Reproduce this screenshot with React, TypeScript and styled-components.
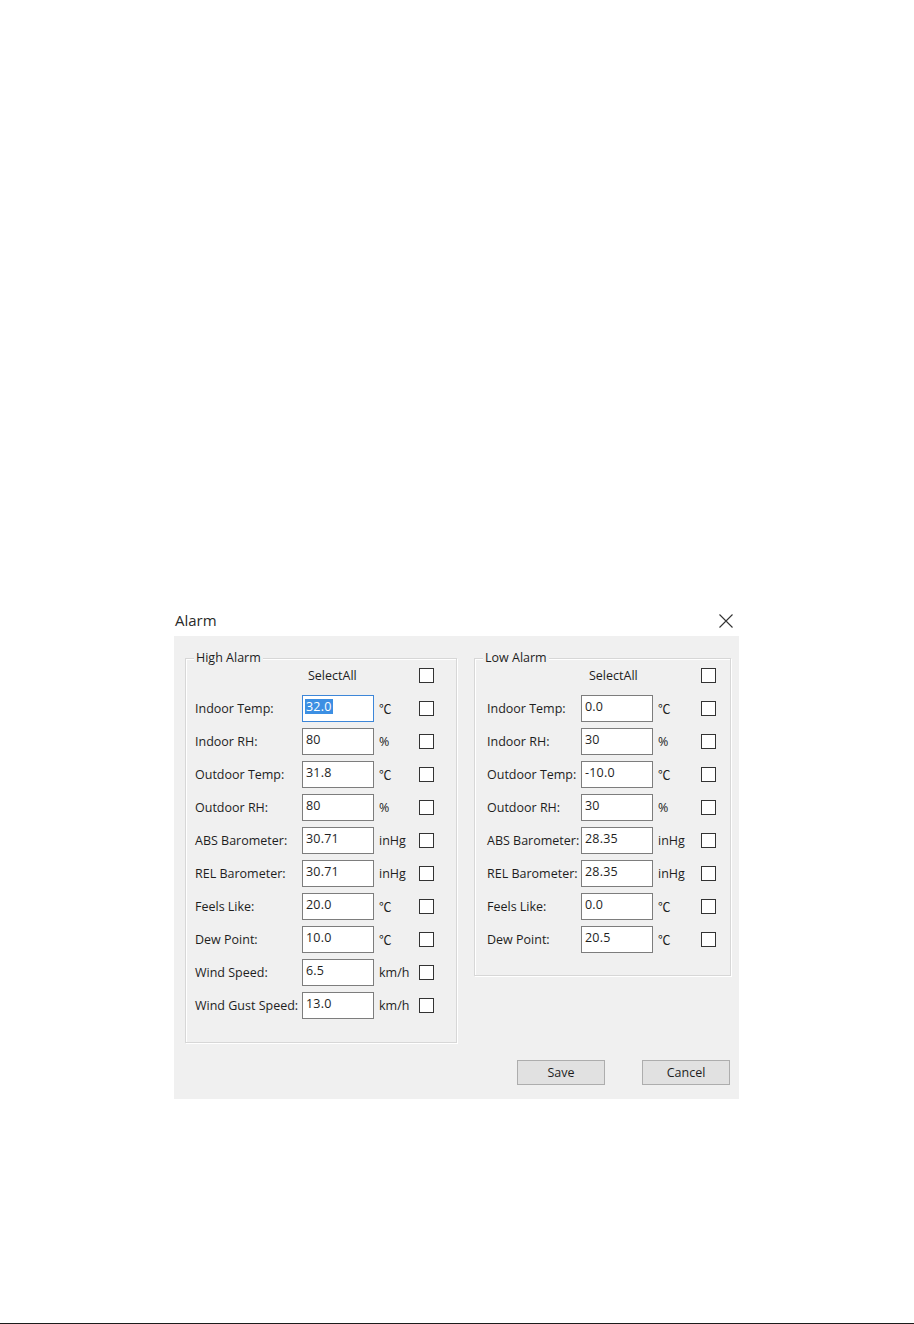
import React from "react";
import styled, { createGlobalStyle } from "styled-components";

const Global = createGlobalStyle`
  html, body { margin: 0; padding: 0; background: #ffffff; }
  body { font-family: "Open Sans", "Noto Sans CJK SC", sans-serif; color: #1e1e1e; }
`;

const Page = styled.div`
  width: 914px;
  height: 1324px;
  display: flex;
  flex-direction: column;
  overflow: hidden;
`;

const Dialog = styled.div`
  margin: 605px 0 0 174px;
  width: 565px;
  display: flex;
  flex-direction: column;
`;

const TitleBar = styled.div`
  height: 31px;
  display: flex;
  align-items: center;
  justify-content: space-between;
  padding: 0 6px 0 1px;
  background: #ffffff;
`;

const Title = styled.span`
  font-size: 15px;
  color: #2a2a2a;
  line-height: 1;
`;

const Body = styled.div`
  background: #f0f0f0;
  padding: 22px 8px 14px 11px;
  display: flex;
  flex-direction: column;
`;

const Columns = styled.div`
  display: flex;
  align-items: flex-start;
  gap: 17px;
`;

const Group = styled.div<{ $w: number; $padL: number; $padB: number }>`
  position: relative;
  width: ${(p) => p.$w}px;
  box-sizing: border-box;
  border: 1px solid #d7d7d7;
  box-shadow: inset 1px 1px 0 #ffffff, 1px 1px 0 #ffffff;
  padding: 0 0 ${(p) => p.$padB}px ${(p) => p.$padL}px;
`;

const Legend = styled.span`
  position: absolute;
  top: -10px;
  left: 8px;
  padding: 0 2px;
  background: #f0f0f0;
  font-size: 12.5px;
  line-height: 18px;
  color: #1e1e1e;
`;

const Row = styled.div<{ $label: number; $unit: number }>`
  display: grid;
  grid-template-columns: ${(p) => p.$label}px 72px ${(p) => p.$unit}px 15px;
  align-items: center;
  height: 33px;
  font-size: 12.5px;
  white-space: nowrap;
`;

const Label = styled.span`
  color: #1e1e1e;
`;

const SelectAllText = styled.span<{ $pad: number }>`
  padding-left: ${(p) => p.$pad}px;
`;

const Field = styled.div<{ $focus?: boolean }>`
  box-sizing: border-box;
  height: 27px;
  background: #ffffff;
  border: 1px solid ${(p) => (p.$focus ? "#3d86d8" : "#7d7d7d")};
  padding: 3px 0 0 2px;
  font-size: 12.5px;
  line-height: 15px;
  letter-spacing: 0.2px;
`;

const Value = styled.span<{ $selected?: boolean }>`
  display: inline-block;
  padding: 0 1px;
  background: ${(p) => (p.$selected ? "#3c8fe3" : "transparent")};
  color: ${(p) => (p.$selected ? "#ffffff" : "#1e1e1e")};
`;

const Unit = styled.span`
  padding-left: 5px;
`;

const Check = styled.span`
  box-sizing: border-box;
  width: 15px;
  height: 15px;
  border: 1px solid #333333;
  background: #ffffff;
`;

const Buttons = styled.div`
  margin-top: 17px;
  display: flex;
  justify-content: flex-end;
  gap: 37px;
  padding-right: 1px;
`;

const Button = styled.button`
  width: 88px;
  height: 25px;
  box-sizing: border-box;
  border: 1px solid #adadad;
  background: #e1e1e1;
  font-family: "Open Sans", "Noto Sans CJK SC", sans-serif;
  font-size: 12.5px;
  color: #1e1e1e;
  padding: 0;
`;

const Rule = styled.div`
  margin-top: auto;
  height: 1px;
  margin-bottom: 0;
  background: #1c1c1c;
`;

type Item = { label: string; value: string; unit: string; selected?: boolean };

const high: Item[] = [
  { label: "Indoor Temp:", value: "32.0", unit: "℃", selected: true },
  { label: "Indoor RH:", value: "80", unit: "%" },
  { label: "Outdoor Temp:", value: "31.8", unit: "℃" },
  { label: "Outdoor RH:", value: "80", unit: "%" },
  { label: "ABS Barometer:", value: "30.71", unit: "inHg" },
  { label: "REL Barometer:", value: "30.71", unit: "inHg" },
  { label: "Feels Like:", value: "20.0", unit: "℃" },
  { label: "Dew Point:", value: "10.0", unit: "℃" },
  { label: "Wind Speed:", value: "6.5", unit: "km/h" },
  { label: "Wind Gust Speed:", value: "13.0", unit: "km/h" },
];

const low: Item[] = [
  { label: "Indoor Temp:", value: "0.0", unit: "℃" },
  { label: "Indoor RH:", value: "30", unit: "%" },
  { label: "Outdoor Temp:", value: "-10.0", unit: "℃" },
  { label: "Outdoor RH:", value: "30", unit: "%" },
  { label: "ABS Barometer:", value: "28.35", unit: "inHg" },
  { label: "REL Barometer:", value: "28.35", unit: "inHg" },
  { label: "Feels Like:", value: "0.0", unit: "℃" },
  { label: "Dew Point:", value: "20.5", unit: "℃" },
];

type GroupProps = {
  title: string;
  items: Item[];
  width: number;
  padL: number;
  padB: number;
  labelW: number;
  unitW: number;
  selectPad: number;
};

function AlarmGroup({ title, items, width, padL, padB, labelW, unitW, selectPad }: GroupProps) {
  return (
    <Group $w={width} $padL={padL} $padB={padB}>
      <Legend>{title}</Legend>
      <Row $label={labelW} $unit={unitW}>
        <span />
        <SelectAllText $pad={selectPad}>SelectAll</SelectAllText>
        <span />
        <Check />
      </Row>
      {items.map((it) => (
        <Row key={it.label} $label={labelW} $unit={unitW}>
          <Label>{it.label}</Label>
          <Field $focus={it.selected}>
            <Value $selected={it.selected}>{it.value}</Value>
          </Field>
          <Unit>{it.unit}</Unit>
          <Check />
        </Row>
      ))}
    </Group>
  );
}

function CloseIcon() {
  return (
    <svg width="14" height="14" viewBox="0 0 14 14">
      <path d="M0.5 0.5 L13.5 13.5 M13.5 0.5 L0.5 13.5" stroke="#333" strokeWidth="1.1" fill="none" />
    </svg>
  );
}

export default function App() {
  return (
    <>
      <Global />
      <Page>
        <Dialog>
          <TitleBar>
            <Title>Alarm</Title>
            <CloseIcon />
          </TitleBar>
          <Body>
            <Columns>
              <AlarmGroup
                title="High Alarm"
                items={high}
                width={272}
                padL={9}
                padB={20}
                labelW={107}
                unitW={45}
                selectPad={6}
              />
              <AlarmGroup
                title="Low Alarm"
                items={low}
                width={257}
                padL={12}
                padB={19}
                labelW={94}
                unitW={48}
                selectPad={8}
              />
            </Columns>
            <Buttons>
              <Button>Save</Button>
              <Button>Cancel</Button>
            </Buttons>
          </Body>
        </Dialog>
        <Rule />
      </Page>
    </>
  );
}
